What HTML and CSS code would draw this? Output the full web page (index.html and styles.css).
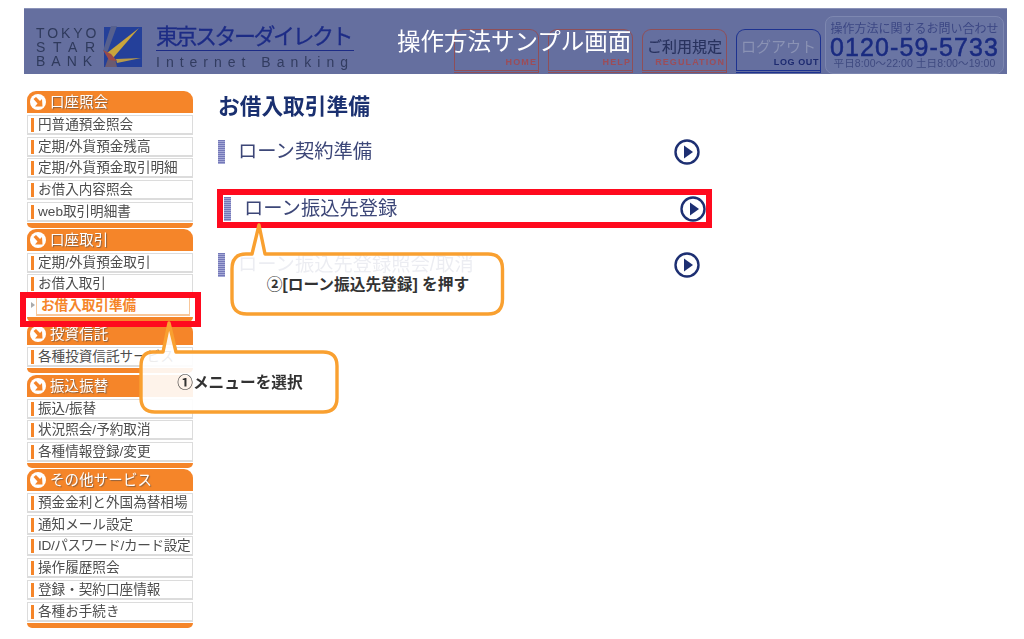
FILE: index.html
```html
<!DOCTYPE html>
<html lang="ja">
<head>
<meta charset="utf-8">
<title>お借入取引準備</title>
<link rel="stylesheet" href="styles.css">
</head>
<body>
<div class="page">
  <header class="header">
    <div class="bank-name"><span>TOKYO</span><span>STAR</span><span>BANK</span></div>
    <svg class="logo-mark" width="40" height="42" viewBox="0 0 40 42">
      <rect x="1" y="1" width="38" height="40" fill="#24409a"/>
      <path d="M0 25 L8 0 L14 0 L4 27 Z" fill="#56608e"/>
      <path d="M4 27 L36 2 L10 32 Z" fill="#c9a53c"/>
      <path d="M6 30 L2 41 L14 41 L12 33 Z" fill="#6a5a70"/>
      <path d="M13 33 L38 32 L14 37 Z" fill="#b89a48"/>
      <path d="M0 24 L8 28 L14 35 L6 34 Z" fill="#9c4a48"/>
    </svg>
    <div class="brand">
      <div class="brand-ja">東京スターダイレクト</div>
      <div class="brand-en">Internet Banking</div>
    </div>
    <nav class="header-nav">
      <a class="nav-btn"><span class="nav-ja nav-hidden"></span><span class="nav-en">HOME</span></a>
      <a class="nav-btn"><span class="nav-ja nav-hidden"></span><span class="nav-en">HELP</span></a>
      <a class="nav-btn nav-reg"><span class="nav-ja">ご利用規定</span><span class="nav-en">REGULATION</span></a>
      <a class="nav-btn nav-out"><span class="nav-ja">ログアウト</span><span class="nav-en">LOG OUT</span></a>
    </nav>
    <div class="phone">
      <div class="phone-label">操作方法に関するお問い合わせ</div>
      <div class="phone-num">0120-59-5733</div>
      <div class="phone-hours">平日8:00〜22:00 土日8:00〜19:00</div>
    </div>
    <div class="header-title">操作方法サンプル画面</div>
  </header>

  <main class="main">
    <aside class="sidebar">
      <section class="menu">
        <h2 class="menu-head"><svg class="menu-icon" viewBox="0 0 16 16"><circle cx="8" cy="8" r="8" fill="#fff"/><path d="M3.5 5 L6 3 L10 7 L12 5 L12.5 12.5 L5 12.5 L7.5 9.5 Z" fill="#f58529"/></svg>口座照会</h2>
        <a class="menu-item">円普通預金照会</a>
        <a class="menu-item">定期/外貨預金残高</a>
        <a class="menu-item">定期/外貨預金取引明細</a>
        <a class="menu-item">お借入内容照会</a>
        <a class="menu-item">web取引明細書</a>
        <div class="menu-foot"></div>
      </section>
      <section class="menu">
        <h2 class="menu-head"><svg class="menu-icon" viewBox="0 0 16 16"><circle cx="8" cy="8" r="8" fill="#fff"/><path d="M3.5 5 L6 3 L10 7 L12 5 L12.5 12.5 L5 12.5 L7.5 9.5 Z" fill="#f58529"/></svg>口座取引</h2>
        <a class="menu-item">定期/外貨預金取引</a>
        <a class="menu-item">お借入取引</a>
        <a class="menu-item menu-current">お借入取引準備</a>
        <div class="menu-foot"></div>
      </section>
      <section class="menu menu-invest">
        <h2 class="menu-head"><svg class="menu-icon" viewBox="0 0 16 16"><circle cx="8" cy="8" r="8" fill="#fff"/><path d="M3.5 5 L6 3 L10 7 L12 5 L12.5 12.5 L5 12.5 L7.5 9.5 Z" fill="#f58529"/></svg>投資信託</h2>
        <a class="menu-item">各種投資信託サービス</a>
        <div class="menu-foot"></div>
      </section>
      <section class="menu">
        <h2 class="menu-head"><svg class="menu-icon" viewBox="0 0 16 16"><circle cx="8" cy="8" r="8" fill="#fff"/><path d="M3.5 5 L6 3 L10 7 L12 5 L12.5 12.5 L5 12.5 L7.5 9.5 Z" fill="#f58529"/></svg>振込振替</h2>
        <a class="menu-item">振込/振替</a>
        <a class="menu-item">状況照会/予約取消</a>
        <a class="menu-item">各種情報登録/変更</a>
        <div class="menu-foot"></div>
      </section>
      <section class="menu">
        <h2 class="menu-head"><svg class="menu-icon" viewBox="0 0 16 16"><circle cx="8" cy="8" r="8" fill="#fff"/><path d="M3.5 5 L6 3 L10 7 L12 5 L12.5 12.5 L5 12.5 L7.5 9.5 Z" fill="#f58529"/></svg>その他サービス</h2>
        <a class="menu-item">預金金利と外国為替相場</a>
        <a class="menu-item">通知メール設定</a>
        <a class="menu-item menu-tight">ID/パスワード/カード設定</a>
        <a class="menu-item">操作履歴照会</a>
        <a class="menu-item">登録・契約口座情報</a>
        <a class="menu-item">各種お手続き</a>
        <div class="menu-foot"></div>
      </section>
    </aside>

    <div class="content">
      <h1 class="content-title">お借入取引準備</h1>
      <ul class="action-list">
        <li class="action"><span class="action-bar"></span><span class="action-text">ローン契約準備</span><svg class="action-go" viewBox="0 0 26 26"><circle cx="13" cy="13" r="11.5" fill="#fff" stroke="#1d2f72" stroke-width="2.4"/><path d="M10 6.5 L19 13 L10 19.5 Z" fill="#1d2f72"/></svg></li>
        <li class="action action-shift"><span class="action-bar"></span><span class="action-text">ローン振込先登録</span><svg class="action-go" viewBox="0 0 26 26"><circle cx="13" cy="13" r="11.5" fill="#fff" stroke="#1d2f72" stroke-width="2.4"/><path d="M10 6.5 L19 13 L10 19.5 Z" fill="#1d2f72"/></svg></li>
        <li class="action"><span class="action-bar"></span><span class="action-text">ローン振込先登録照会/取消</span><svg class="action-go" viewBox="0 0 26 26"><circle cx="13" cy="13" r="11.5" fill="#fff" stroke="#1d2f72" stroke-width="2.4"/><path d="M10 6.5 L19 13 L10 19.5 Z" fill="#1d2f72"/></svg></li>
      </ul>
    </div>
  </main>

  <div class="mark mark-menu"></div>
  <div class="mark mark-action"></div>

  <div class="callout callout-menu">
    <svg class="callout-shape" width="202" height="95" viewBox="0 0 202 95">
      <path d="M14 32 H24 L30 3 L37 32 H184 Q198 32 198 46 V78 Q198 92 184 92 H16 Q2 92 2 78 V46 Q2 32 14 32 Z" fill="rgba(255,255,255,.9)" stroke="#f9a030" stroke-width="3.4" stroke-linejoin="round"/>
    </svg>
    <span class="callout-text">①メニューを選択</span>
  </div>
  <div class="callout callout-action">
    <svg class="callout-shape" width="278" height="95" viewBox="0 0 278 95">
      <path d="M17 32 H23 L30 3 L36 32 H259 Q273.5 32 273.5 47 V77 Q273.5 92 259 92 H18 Q3 92 3 77 V47 Q3 32 17 32 Z" fill="rgba(255,255,255,.9)" stroke="#f9a030" stroke-width="3.4" stroke-linejoin="round"/>
    </svg>
    <span class="callout-text">②[ローン振込先登録] を押す</span>
  </div>
</div>
</body>
</html>
```
FILE: styles.css
```css
* { box-sizing: border-box; }
html, body { margin: 0; padding: 0; background: #fff; }
body { font-family: "Liberation Sans", "Noto Sans CJK JP", sans-serif; overflow: hidden; }
.page { position: relative; width: 1024px; height: 639px; padding: 8px 17px 0 24px; overflow: hidden; }

.header {
  position: relative; display: flex; align-items: flex-start; height: 66px;
  background: #656f9f; border-top: 1px solid #8b93b8; filter: blur(.4px);
}
.bank-name {
  width: 66px; margin: 17px 0 0 12px; display: flex; flex-direction: column;
  font-size: 14px; line-height: 14px; color: #2f3a5c; letter-spacing: 2.9px;
}
.bank-name span:nth-child(2) { letter-spacing: 7.6px; }
.bank-name span:nth-child(3) { letter-spacing: 6px; }
.logo-mark { margin: 17px 0 0 1px; flex: none; }
.brand { width: 198px; margin: 15px 0 0 13px; }
.brand-ja {
  font-size: 22px; line-height: 26px; color: #1d2c86; letter-spacing: -2.5px; font-weight: 400;
  -webkit-text-stroke: .3px #1d2c86;
  border-bottom: 1.5px solid #1d2c86; white-space: nowrap; height: 27px;
}
.brand-en { font-size: 14px; line-height: 22px; color: #323c60; letter-spacing: 6px; white-space: nowrap; }
.header-nav { display: flex; gap: 9px; margin: 20px 0 0 100px; }
.nav-btn {
  width: 85px; height: 44px; display: flex; flex-direction: column; align-items: center;
  border: 1px solid #8f4f58; border-bottom: 3px double #8f4f58; border-radius: 9px 9px 0 0;
}
.nav-ja { height: 24px; margin-top: 3px; font-size: 15px; line-height: 28px; color: #28325e; -webkit-text-stroke: .15px #28325e; white-space: nowrap; }
.nav-en { align-self: flex-end; padding-right: 1px; font-size: 9px; line-height: 11px; font-weight: 700; letter-spacing: 1.1px; color: #9c4d58; white-space: nowrap; }
.nav-reg .nav-en { letter-spacing: 1.1px; }
.nav-out { border-color: #1d3290; border-bottom-color: #1d3290; }
.nav-out .nav-ja { color: #8a92b4; -webkit-text-stroke: 0; }
.nav-out .nav-en { color: #1d2a70; letter-spacing: .6px; }
.phone {
  width: 179px; height: 58px; margin: 7px 0 0 4px; padding: 4.5px 0 0; text-align: center;
  background: #6a75a3; border: 1px solid #7d87b0; border-radius: 8px; white-space: nowrap;
}
.phone-label { font-size: 12px; line-height: 15px; color: #3c4784; }
.phone-num { font-size: 25px; line-height: 20px; font-weight: 400; color: #1a2b80; -webkit-text-stroke: .5px #1a2b80; letter-spacing: 1.1px; }
.phone-hours { font-size: 10.5px; line-height: 12px; color: #3f4a80; letter-spacing: .1px; }
.header-title {
  position: absolute; left: 373px; top: 15px; font-size: 23.5px; line-height: 36px;
  color: #fff; white-space: nowrap;
}

.main { display: flex; align-items: flex-start; margin-top: 17px; }
.sidebar { width: 166px; margin-left: 3px; flex: none; filter: blur(.35px); }
.menu-head {
  display: flex; align-items: center; gap: 4px; height: 22px; margin: 0; padding: 0 0 3px 3px;
  background: #f58529; border-radius: 9px 9px 0 0; color: #fff; font-size: 14.4px; font-weight: 400;
  text-shadow: 1px 1px 1px #8a6040; letter-spacing: .2px; white-space: nowrap;
}
.menu-icon { width: 16px; height: 16px; flex: none; margin-top: 3px; }
.menu-item {
  position: relative; display: block; height: 20px; margin: 1.75px 0 0; padding-left: 10px;
  border: 1px solid #dcdcdc; border-bottom-width: 2px; background: #fff;
  font-size: 13.6px; line-height: 17px; color: #4d4d4d; white-space: nowrap; overflow: hidden;
}
.menu-tight { letter-spacing: -.35px; }
.menu-item::before {
  content: ""; position: absolute; left: 3px; top: 2px; width: 2.5px; height: 14px; background: #f58529;
}
.menu-current { margin-left: 9px; margin-right: 3px; padding-left: 4px; border-color: #f8c79a; color: #f58529; font-weight: 700; overflow: visible; }
.menu-current::before {
  left: -6px; top: 5px; width: 0; height: 0; background: none;
  border-left: 4px solid #aaa; border-top: 3.5px solid transparent; border-bottom: 3.5px solid transparent;
}
.menu-foot { height: 5px; margin: 1px 0; background: #f58529; border-radius: 0 0 6px 6px; }
.menu-invest .menu-foot { margin-bottom: 2px; }

.content { margin-left: 25px; width: 482px; filter: blur(.35px); }
.content-title { margin: 1px 0 0; font-size: 21.7px; line-height: 30px; font-weight: 700; color: #1a3070; white-space: nowrap; }
.action-list { list-style: none; margin: 17px 0 0; padding: 0; display: flex; flex-direction: column; gap: 30.5px; }
.action { display: flex; align-items: center; height: 26px; }
.action-shift { margin-left: 6px; margin-right: -6px; }
.action-bar {
  width: 7px; height: 24px; flex: none;
  background: repeating-linear-gradient(#7478b8 0 1px, #a5a9d6 1px 2px);
}
.action-text { margin-left: 13px; font-size: 19.3px; line-height: 28px; color: #3d4778; white-space: nowrap; }
.action-go { width: 26px; height: 26px; margin-left: auto; flex: none; }

.mark { position: absolute; border: 6px solid #ff0a1e; }
.mark-menu { left: 20px; top: 292px; width: 181px; height: 35px; }
.mark-action { left: 217px; top: 189px; width: 495px; height: 39px; }

.callout { position: absolute; }
.callout-menu { left: 139px; top: 320px; width: 202px; height: 95px; }
.callout-action { left: 229px; top: 222px; width: 278px; height: 95px; }
.callout-shape { display: block; }
.callout-text {
  position: absolute; left: 0; right: 0; top: 53px; text-align: center;
  font-size: 15.7px; line-height: 20px; font-weight: 700; color: #333; white-space: nowrap;
}
```
